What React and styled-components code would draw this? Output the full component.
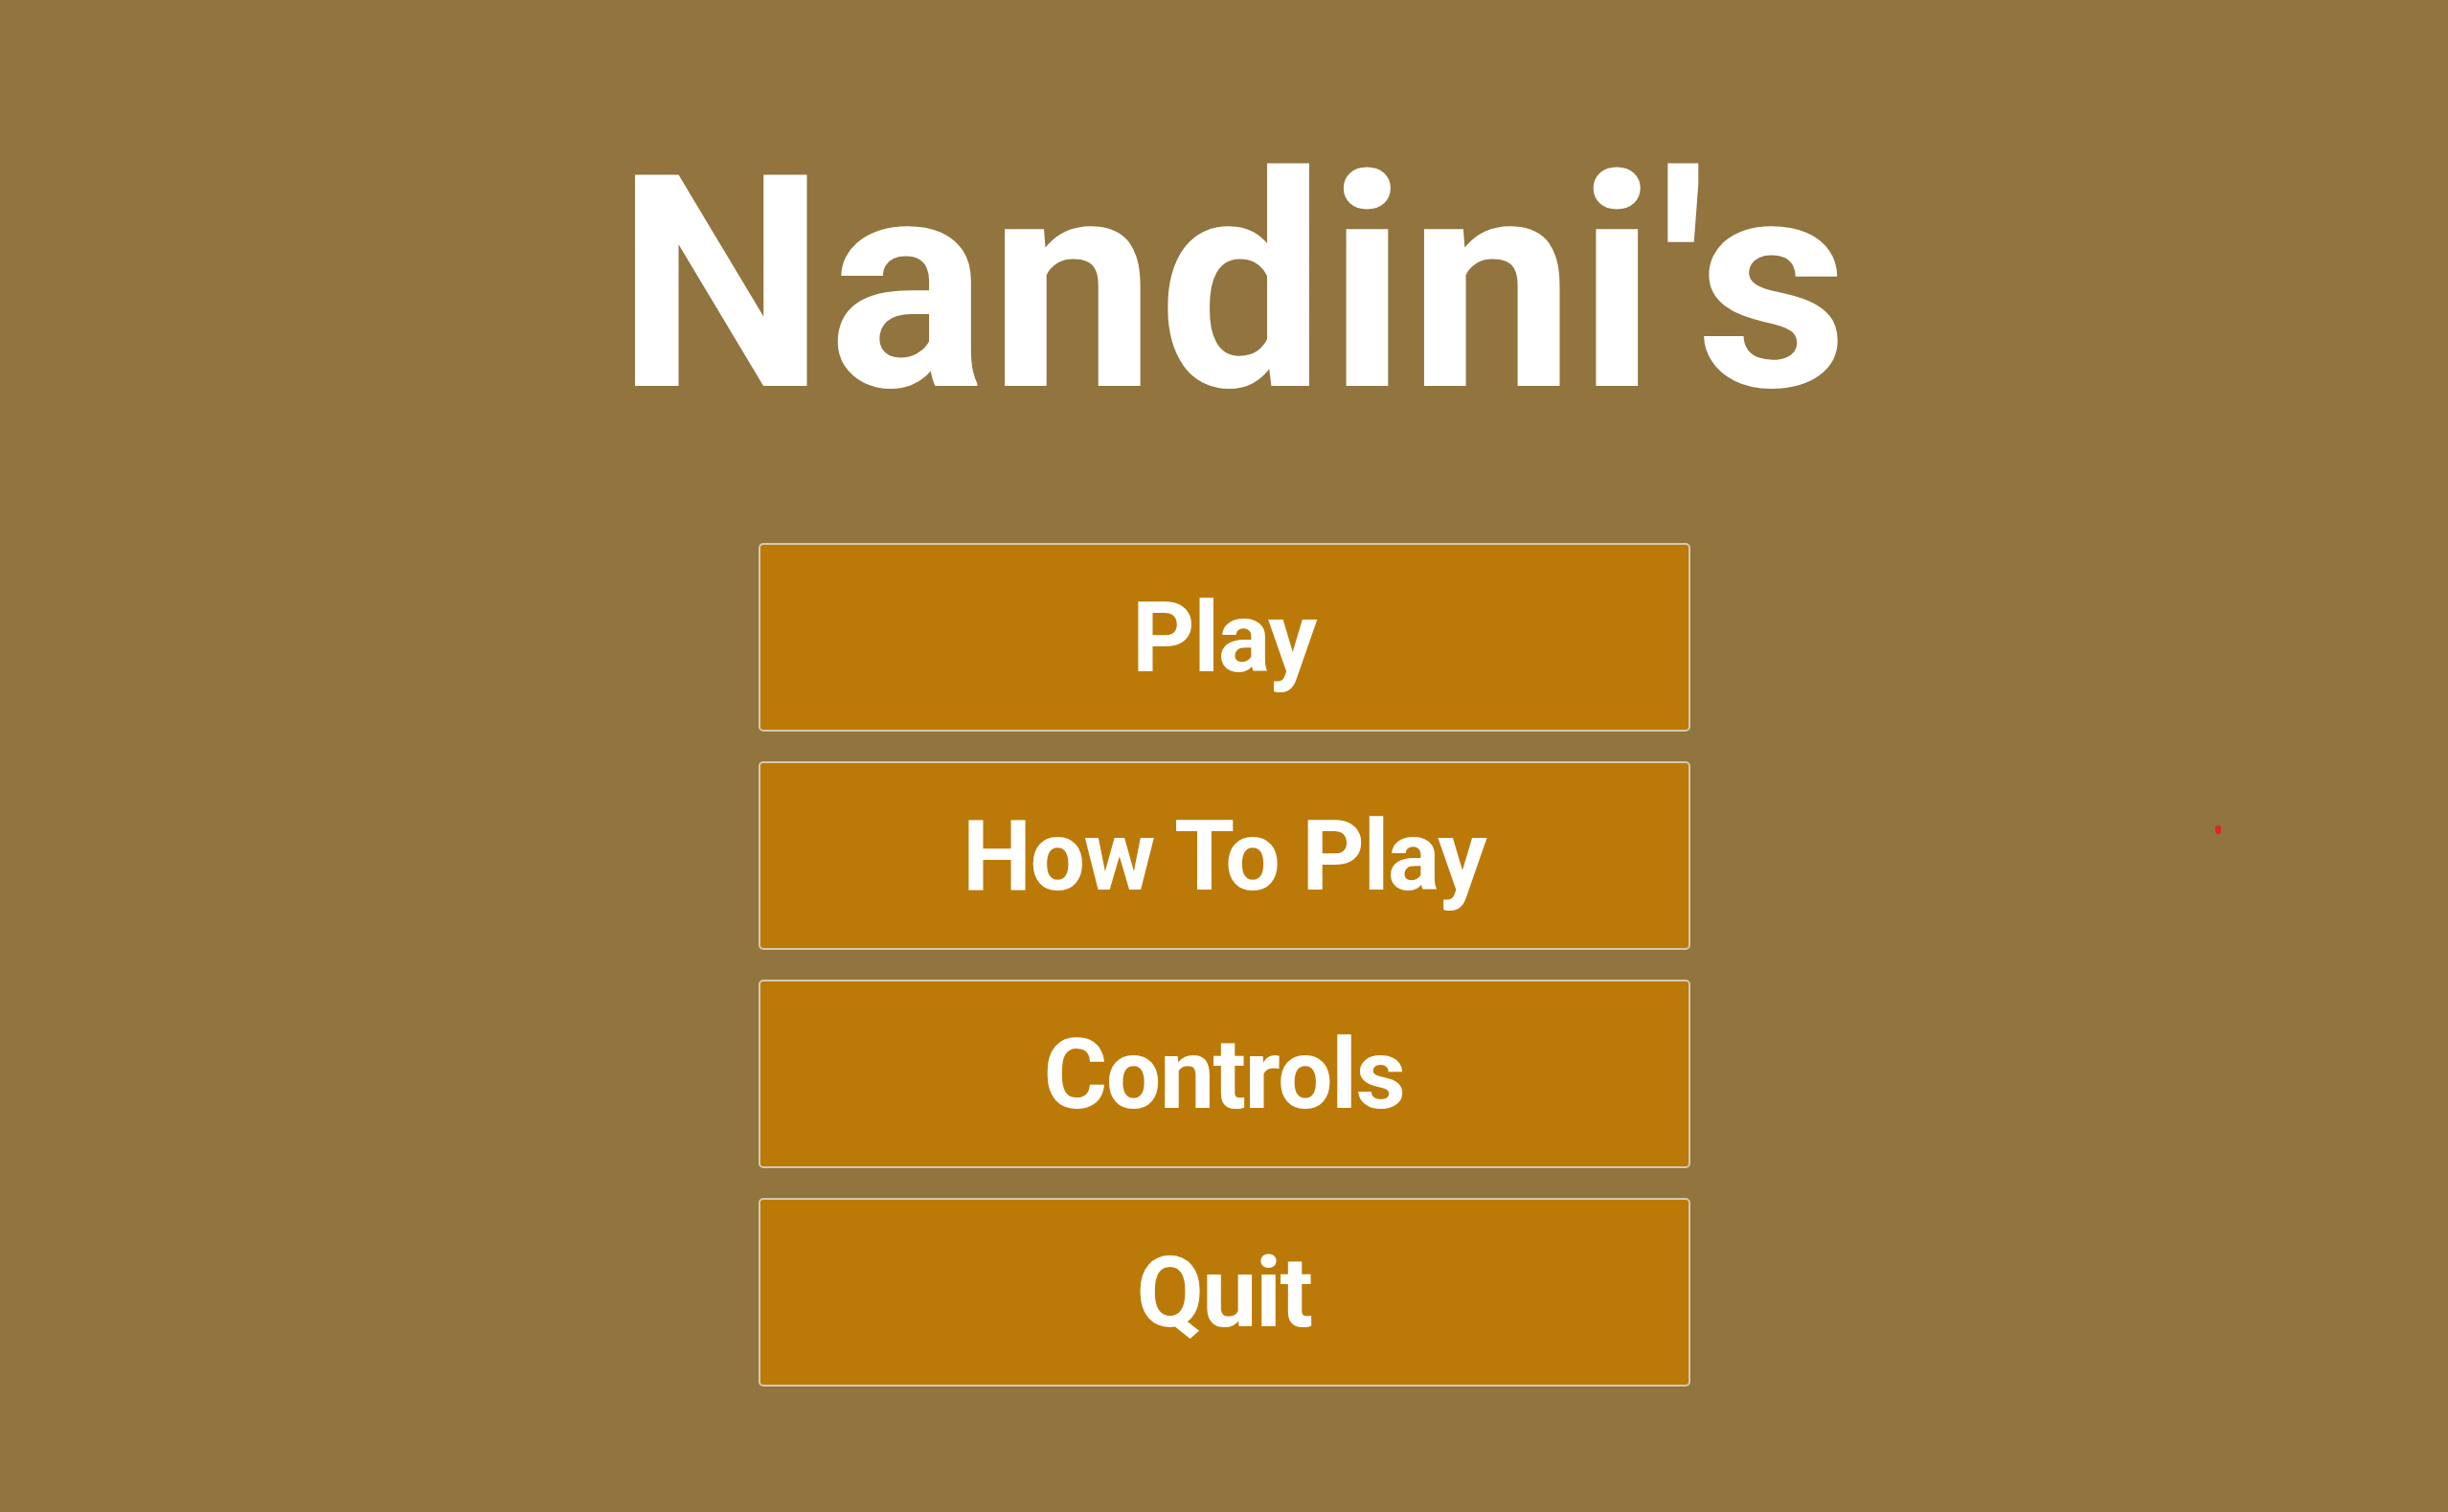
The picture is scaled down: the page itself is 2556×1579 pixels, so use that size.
import React from "react";
import styled, { createGlobalStyle } from "styled-components";

const GlobalStyle = createGlobalStyle`
  html, body {
    margin: 0;
    padding: 0;
    background: #91743e;
  }
  body {
    font-family: "Roboto", "Liberation Sans", sans-serif;
  }
`;

const Screen = styled.div`
  position: relative;
  width: 100%;
  min-height: 1579px;
  display: flex;
  flex-direction: column;
  align-items: center;
  background: #91743e;
`;

const Title = styled.h1`
  margin: 142px 0 0 20px;
  font-family: "Roboto", "Liberation Sans", sans-serif;
  font-weight: 700;
  font-size: 310px;
  line-height: 310px;
  letter-spacing: 2.5px;
  color: #ffffff;
`;

const Menu = styled.div`
  margin-top: 115px;
  display: flex;
  flex-direction: column;
  gap: 31px;
`;

const MenuButton = styled.button`
  width: 973px;
  height: 197px;
  box-sizing: border-box;
  display: flex;
  align-items: center;
  justify-content: center;
  background: #bb7a07;
  border: 2px solid #d6c8ae;
  border-radius: 5px;
  color: #ffffff;
  font-family: "Roboto", "Liberation Sans", sans-serif;
  font-weight: 700;
  font-size: 102px;
  letter-spacing: -1.5px;
  padding: 0;
  cursor: pointer;
`;

const Cursor = styled.span`
  position: absolute;
  left: 2313px;
  top: 862px;
  width: 6px;
  height: 9px;
  border-radius: 3px;
  background: #e5231f;
`;

const items = ["Play", "How To Play", "Controls", "Quit"];

export default function App() {
  return (
    <>
      <GlobalStyle />
      <Screen>
        <Title>Nandini's</Title>
        <Menu>
          {items.map((label) => (
            <MenuButton key={label}>{label}</MenuButton>
          ))}
        </Menu>
        <Cursor />
      </Screen>
    </>
  );
}
